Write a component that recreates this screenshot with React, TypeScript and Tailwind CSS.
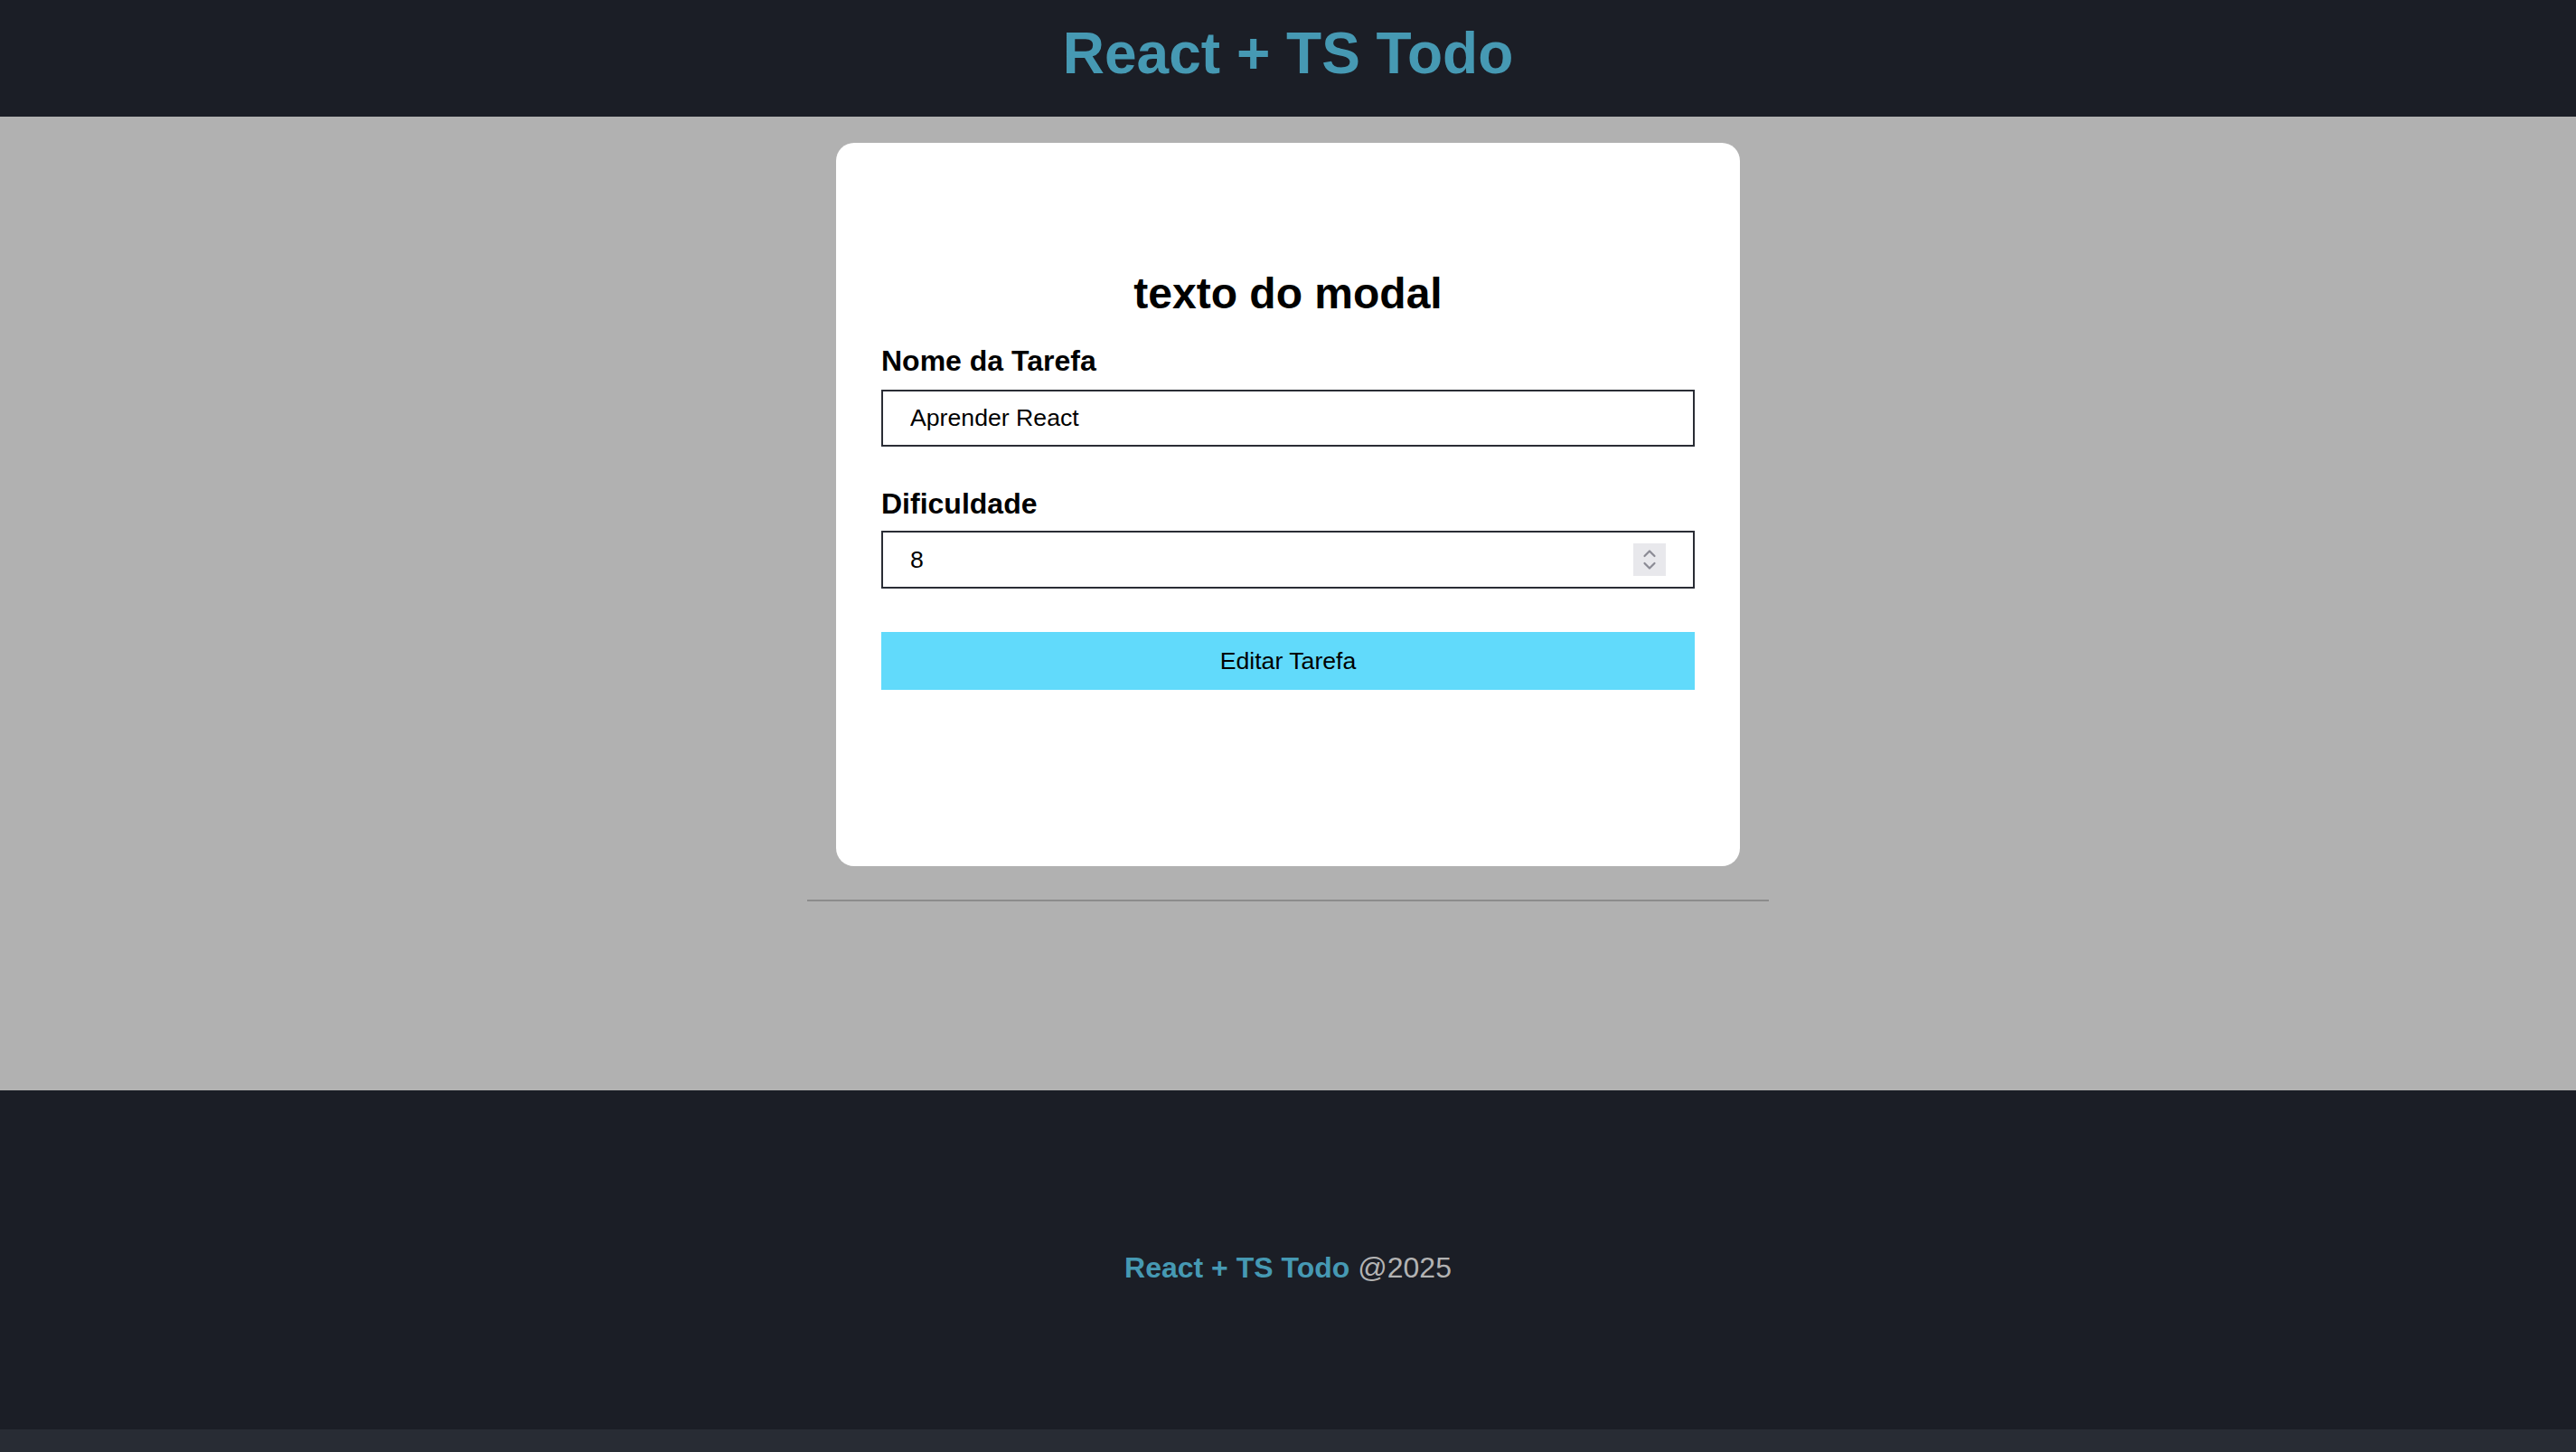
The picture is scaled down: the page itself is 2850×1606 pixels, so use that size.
import { useState } from 'react';

const font = { fontFamily: '"Liberation Sans", Arial, Helvetica, sans-serif' };

function Spinner() {
    return (
        <div className="flex h-[36px] w-[36px] flex-col items-center justify-center bg-[#e8e8ec]">
            <svg width="18" height="30" viewBox="0 0 18 30" fill="none" stroke="#8a8a94" strokeWidth="2.2" strokeLinecap="round" strokeLinejoin="round">
                <path d="M3.5 11 L9 5.5 L14.5 11" />
                <path d="M3.5 19 L9 24.5 L14.5 19" />
            </svg>
        </div>
    );
}

export default function App() {
    const [title, setTitle] = useState('Aprender React');
    const [difficulty, setDifficulty] = useState('8');

    return (
        <div className="flex min-h-screen flex-col bg-[#282c34]" style={font}>
            <header className="flex h-[129px] justify-center bg-[#1b1e26] pt-[22px]">
                <h1 className="text-[64px] leading-[74px] font-bold text-[#4699b3]">React + TS Todo</h1>
            </header>

            <main className="flex h-[1077px] flex-col items-center bg-[#b1b1b1] pt-[29px]">
                <div className="flex h-[800px] w-[1000px] flex-col rounded-[20px] bg-white px-[50px]">
                    <h2 className="mt-[139px] text-center text-[48px] leading-[55px] font-bold text-black">texto do modal</h2>
                    <form className="flex flex-col" onSubmit={(e) => e.preventDefault()}>
                        <label className="mt-[29px] text-[32px] leading-[37px] font-bold text-black">Nome da Tarefa</label>
                        <input
                            value={title}
                            onChange={(e) => setTitle(e.target.value)}
                            className="mt-[13px] h-[63px] w-full border-2 border-[#2a2d35] px-[30px] text-[26.67px] text-black outline-none"
                        />
                        <label className="mt-[45px] text-[32px] leading-[37px] font-bold text-black">Dificuldade</label>
                        <div className="mt-[11px] flex h-[64px] w-full items-center border-2 border-[#2a2d35] pl-[30px] pr-[30px]">
                            <input
                                value={difficulty}
                                onChange={(e) => setDifficulty(e.target.value)}
                                className="h-full flex-1 text-[26.67px] text-black outline-none"
                            />
                            <Spinner />
                        </div>
                        <button type="submit" className="mt-[48px] h-[64px] w-full bg-[#61dafb] text-[26.67px] text-black">
                            Editar Tarefa
                        </button>
                    </form>
                </div>
                <hr className="mt-[37px] w-[1064px] border-t-2 border-[#8c8c8c]" />
            </main>

            <footer className="flex h-[375px] items-center justify-center bg-[#1b1e26] pt-[18px] text-[32px] leading-[37px]">
                <span className="font-bold text-[#4699b3]">React + TS Todo</span>
                <span className="ml-[9px] text-[#b3b3b3]">@2025</span>
            </footer>
        </div>
    );
}
